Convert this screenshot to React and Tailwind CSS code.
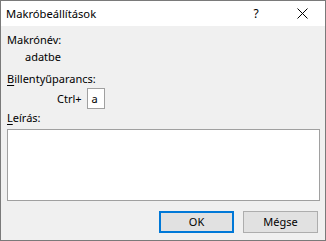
export default function App() {
  const font = { fontFamily: '"Noto Sans", "Open Sans", sans-serif' };
  return (
    <div className="w-[326px] h-[241px] border border-[#7a7a7a] bg-[#f0f0f0] flex flex-col text-[#000] overflow-hidden" style={font}>
      <div className="h-[25px] bg-white flex items-center shrink-0">
        <div className="pl-[5px] text-[11.2px] leading-[16px] flex-1">Makróbeállítások</div>
        <div className="w-[46px] flex justify-center text-[12px] leading-[16px]">?</div>
        <div className="w-[46px] flex justify-center items-center">
          <svg width="11" height="11" viewBox="0 0 11 11">
            <path d="M0.5 0.5 L10.5 10.5 M10.5 0.5 L0.5 10.5" stroke="#000" strokeWidth="1" />
          </svg>
        </div>
      </div>
      <div className="flex flex-col px-[6px] text-[11px] leading-[16px]">
        <div className="mt-[6px]">Makrónév:</div>
        <div className="mt-[1px] pl-[18px]">adatbe</div>
        <div className="mt-[6px]"><span className="underline underline-offset-2">B</span>illentyűparancs:</div>
        <div className="mt-[1px] flex items-center pl-[50px] h-[21px]">
          <span>Ctrl+</span>
          <div className="ml-[5px] w-[18px] h-[21px] bg-white border border-[#a0a0a0] flex items-center pl-[4px]">a</div>
        </div>
        <div className="mt-[1px]"><span className="underline underline-offset-2">L</span>eírás:</div>
        <div className="mt-[3px] h-[72px] w-[313px] bg-white border border-[#a0a0a0]"></div>
        <div className="mt-[10px] flex justify-end gap-[9px] pr-[1px]">
          <div className="w-[75px] h-[22px] bg-[#e1e1e1] border-2 border-[#0078d7] flex items-center justify-center">OK</div>
          <div className="w-[75px] h-[22px] bg-[#e1e1e1] border border-[#adadad] flex items-center justify-center">Mégse</div>
        </div>
      </div>
    </div>
  );
}
